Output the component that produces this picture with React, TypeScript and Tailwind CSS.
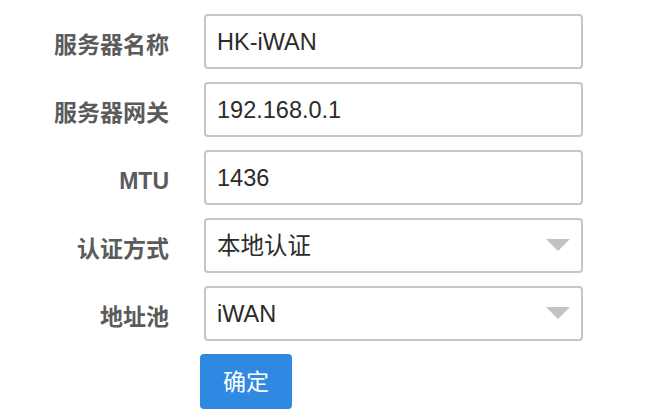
import React from "react";

const font = { fontFamily: '"Liberation Sans", "Noto Sans CJK SC", sans-serif' };

function Label({ children }: { children: React.ReactNode }) {
  return (
    <div className="w-[169px] shrink-0 text-right text-[23px] font-bold leading-none text-[#5b5b5b] pt-[7px]">
      {children}
    </div>
  );
}

function Field({ label, value, select }: { label: string; value: string; select?: boolean }) {
  return (
    <div className="flex items-center h-[55px]">
      <Label>{label}</Label>
      <div className="ml-[35px] w-[379px] h-[55px] border-2 border-[#c6c6c6] rounded-[4px] bg-white flex items-center justify-between pl-[11px] pr-[11px]">
        <span className="text-[23.5px] leading-none text-[#2b2b2b] pt-[2px]">{value}</span>
        {select && (
          <svg width="24" height="12" viewBox="0 0 24 12" className="mt-[-2px]">
            <polygon points="0,0 24,0 12,12" fill="#c2c2c2" />
          </svg>
        )}
      </div>
    </div>
  );
}

export default function App() {
  return (
    <div className="w-[668px] h-[416px] bg-white overflow-hidden" style={font}>
      <div className="flex flex-col gap-[13px] pt-[14px]">
        <Field label="服务器名称" value="HK-iWAN" />
        <Field label="服务器网关" value="192.168.0.1" />
        <Field label="MTU" value="1436" />
        <Field label="认证方式" value="本地认证" select />
        <Field label="地址池" value="iWAN" select />
        <div className="pl-[200px]">
          <button className="w-[92px] h-[55px] rounded-[4px] bg-[#2f89e2] text-white text-[23px] leading-none flex items-center justify-center pt-[2px]">
            确定
          </button>
        </div>
      </div>
    </div>
  );
}
